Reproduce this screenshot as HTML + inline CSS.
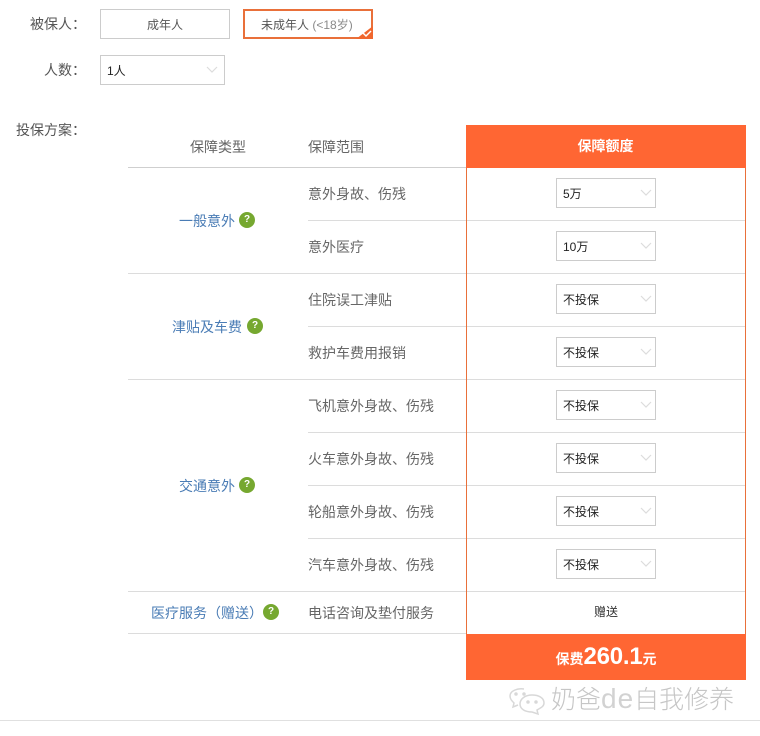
<!DOCTYPE html>
<html lang="zh">
<head>
<meta charset="utf-8">
<style>
html,body{margin:0;padding:0;background:#fff}
body{width:760px;height:736px;position:relative;overflow:hidden;font-family:"Liberation Sans","Noto Sans CJK SC",sans-serif;color:#555}
.t{position:absolute;white-space:nowrap;line-height:20px}
.l{position:absolute;height:1px;background:#dcdcdc}
.s{position:absolute;box-sizing:border-box;width:100px;height:30px;border:1px solid #ccc;background:#fff;font-size:12px;line-height:30px;padding-left:6px;color:#222}
.s svg{position:absolute;right:3px;top:10px}
.g{color:#4a7cb5;font-size:14px}
.q{position:absolute;width:16px;height:16px;border-radius:50%;background:#76a830;color:#fff;font-size:10px;font-weight:bold;text-align:center;line-height:16px}
.c{font-size:14px;color:#666}
</style>
</head>
<body>
<div class="t" style="left:30px;top:14px;font-size:14px;color:#555">被保人：</div>
<div style="position:absolute;left:100px;top:9px;width:130px;height:30px;box-sizing:border-box;border:1px solid #ccc;text-align:center;font-size:12px;line-height:30px;color:#555">成年人</div>
<div style="position:absolute;left:243px;top:9px;width:130px;height:30px;box-sizing:border-box;border:2px solid #e9703a;font-size:12px;line-height:28px;padding-left:16px;color:#555;white-space:nowrap">未成年人 <span style="color:#8a8a8a">(&lt;18岁)</span></div>
<svg style="position:absolute;left:355px;top:23px" width="18" height="16" viewBox="0 0 18 16"><path d="M18 3V16H1Z" fill="#f0672e"/><path d="M8 10l3 3 5-5" fill="none" stroke="#fff" stroke-width="1.500"/></svg>

<div class="t" style="left:44px;top:60px;font-size:14px">人数：</div>
<div class="s" style="left:100px;top:55px;width:125px;font-size:12px">1人<svg style="right:6px" width="12" height="8"><path d="M1 1l5 5 5-5" fill="none" stroke="#dcdcdc" stroke-width="1.200"/></svg></div>

<div class="t" style="left:16px;top:120px;font-size:14px">投保方案：</div>
<div class="t c" style="left:190px;top:137px">保障类型</div>
<div class="t c" style="left:308px;top:137px">保障范围</div>

<div class="l" style="left:128px;width:338px;top:167px;background:#cfcfcf"></div>
<div class="l" style="left:308px;width:438px;top:220px"></div>
<div class="l" style="left:128px;width:618px;top:273px"></div>
<div class="l" style="left:308px;width:438px;top:326px"></div>
<div class="l" style="left:128px;width:618px;top:379px"></div>
<div class="l" style="left:308px;width:438px;top:432px"></div>
<div class="l" style="left:308px;width:438px;top:485px"></div>
<div class="l" style="left:308px;width:438px;top:538px"></div>
<div class="l" style="left:128px;width:618px;top:591px"></div>
<div class="l" style="left:128px;width:338px;top:633px"></div>
<div class="l" style="left:0;width:760px;top:720px;background:#e0e0e0"></div>

<div style="position:absolute;left:466px;top:125px;width:280px;height:555px;box-sizing:border-box;border-left:1px solid #e9703a;border-right:1px solid #e9703a"></div>
<div style="position:absolute;left:466px;top:125px;width:280px;height:43px;background:#ff6633;color:#fff;font-size:14px;font-weight:bold;text-align:center;line-height:43px;text-indent:-1px">保障额度</div>
<div style="position:absolute;left:466px;top:634px;width:280px;height:46px;background:#ff6633;color:#fff;font-weight:bold;text-align:center;font-size:14px;line-height:46px;white-space:nowrap">保费<span style="font-size:24px;letter-spacing:-.2px">260.1</span>元</div>

<div class="t g" style="left:179px;top:211px">一般意外</div><div class="q" style="left:239px;top:212px">?</div>
<div class="t g" style="left:172px;top:317px">津贴及车费</div><div class="q" style="left:247px;top:318px">?</div>
<div class="t g" style="left:179px;top:476px">交通意外</div><div class="q" style="left:239px;top:477px">?</div>
<div class="t g" style="left:151px;top:603px">医疗服务（赠送）</div><div class="q" style="left:263px;top:604px">?</div>

<div class="t c" style="left:308px;top:184px">意外身故、伤残</div>
<div class="t c" style="left:308px;top:237px">意外医疗</div>
<div class="t c" style="left:308px;top:290px">住院误工津贴</div>
<div class="t c" style="left:308px;top:343px">救护车费用报销</div>
<div class="t c" style="left:308px;top:396px">飞机意外身故、伤残</div>
<div class="t c" style="left:308px;top:449px">火车意外身故、伤残</div>
<div class="t c" style="left:308px;top:502px">轮船意外身故、伤残</div>
<div class="t c" style="left:308px;top:555px">汽车意外身故、伤残</div>
<div class="t c" style="left:308px;top:603px">电话咨询及垫付服务</div>

<div class="s" style="left:556px;top:178px">5万<svg width="12" height="8"><path d="M1 1l5 5 5-5" fill="none" stroke="#dcdcdc" stroke-width="1.200"/></svg></div>
<div class="s" style="left:556px;top:231px">10万<svg width="12" height="8"><path d="M1 1l5 5 5-5" fill="none" stroke="#dcdcdc" stroke-width="1.200"/></svg></div>
<div class="s" style="left:556px;top:284px">不投保<svg width="12" height="8"><path d="M1 1l5 5 5-5" fill="none" stroke="#dcdcdc" stroke-width="1.200"/></svg></div>
<div class="s" style="left:556px;top:337px">不投保<svg width="12" height="8"><path d="M1 1l5 5 5-5" fill="none" stroke="#dcdcdc" stroke-width="1.200"/></svg></div>
<div class="s" style="left:556px;top:390px">不投保<svg width="12" height="8"><path d="M1 1l5 5 5-5" fill="none" stroke="#dcdcdc" stroke-width="1.200"/></svg></div>
<div class="s" style="left:556px;top:443px">不投保<svg width="12" height="8"><path d="M1 1l5 5 5-5" fill="none" stroke="#dcdcdc" stroke-width="1.200"/></svg></div>
<div class="s" style="left:556px;top:496px">不投保<svg width="12" height="8"><path d="M1 1l5 5 5-5" fill="none" stroke="#dcdcdc" stroke-width="1.200"/></svg></div>
<div class="s" style="left:556px;top:549px">不投保<svg width="12" height="8"><path d="M1 1l5 5 5-5" fill="none" stroke="#dcdcdc" stroke-width="1.200"/></svg></div>
<div class="t" style="left:594px;top:602px;font-size:12px;color:#333">赠送</div>

<svg style="position:absolute;left:508px;top:686px" width="40" height="30" viewBox="0 0 40 30" fill="none" stroke="#d8d8d8" stroke-width="1.500"><path d="M16 3C9 2 2 5 2 10c0 3 2 5 4 7l-1 4 5-2"/><circle cx="8" cy="8" r="1" fill="#d8d8d8"/><circle cx="16" cy="8" r="1" fill="#d8d8d8"/><path d="M24 9c-7 0-12 4-12 9s5 8 12 8l6 2-1-4c3-2 7-3 7-7 0-5-5-8-12-8z"/><circle cx="20" cy="16" r="1" fill="#d8d8d8"/><circle cx="28" cy="16" r="1" fill="#d8d8d8"/></svg>
<div class="t" style="left:551px;top:685px;font-size:25px;line-height:27px;color:#c6c6c6;font-weight:300">奶爸<span style="font-size:28px;color:#d2d2d2;letter-spacing:1px">de</span>自我修养</div>
</body>
</html>
